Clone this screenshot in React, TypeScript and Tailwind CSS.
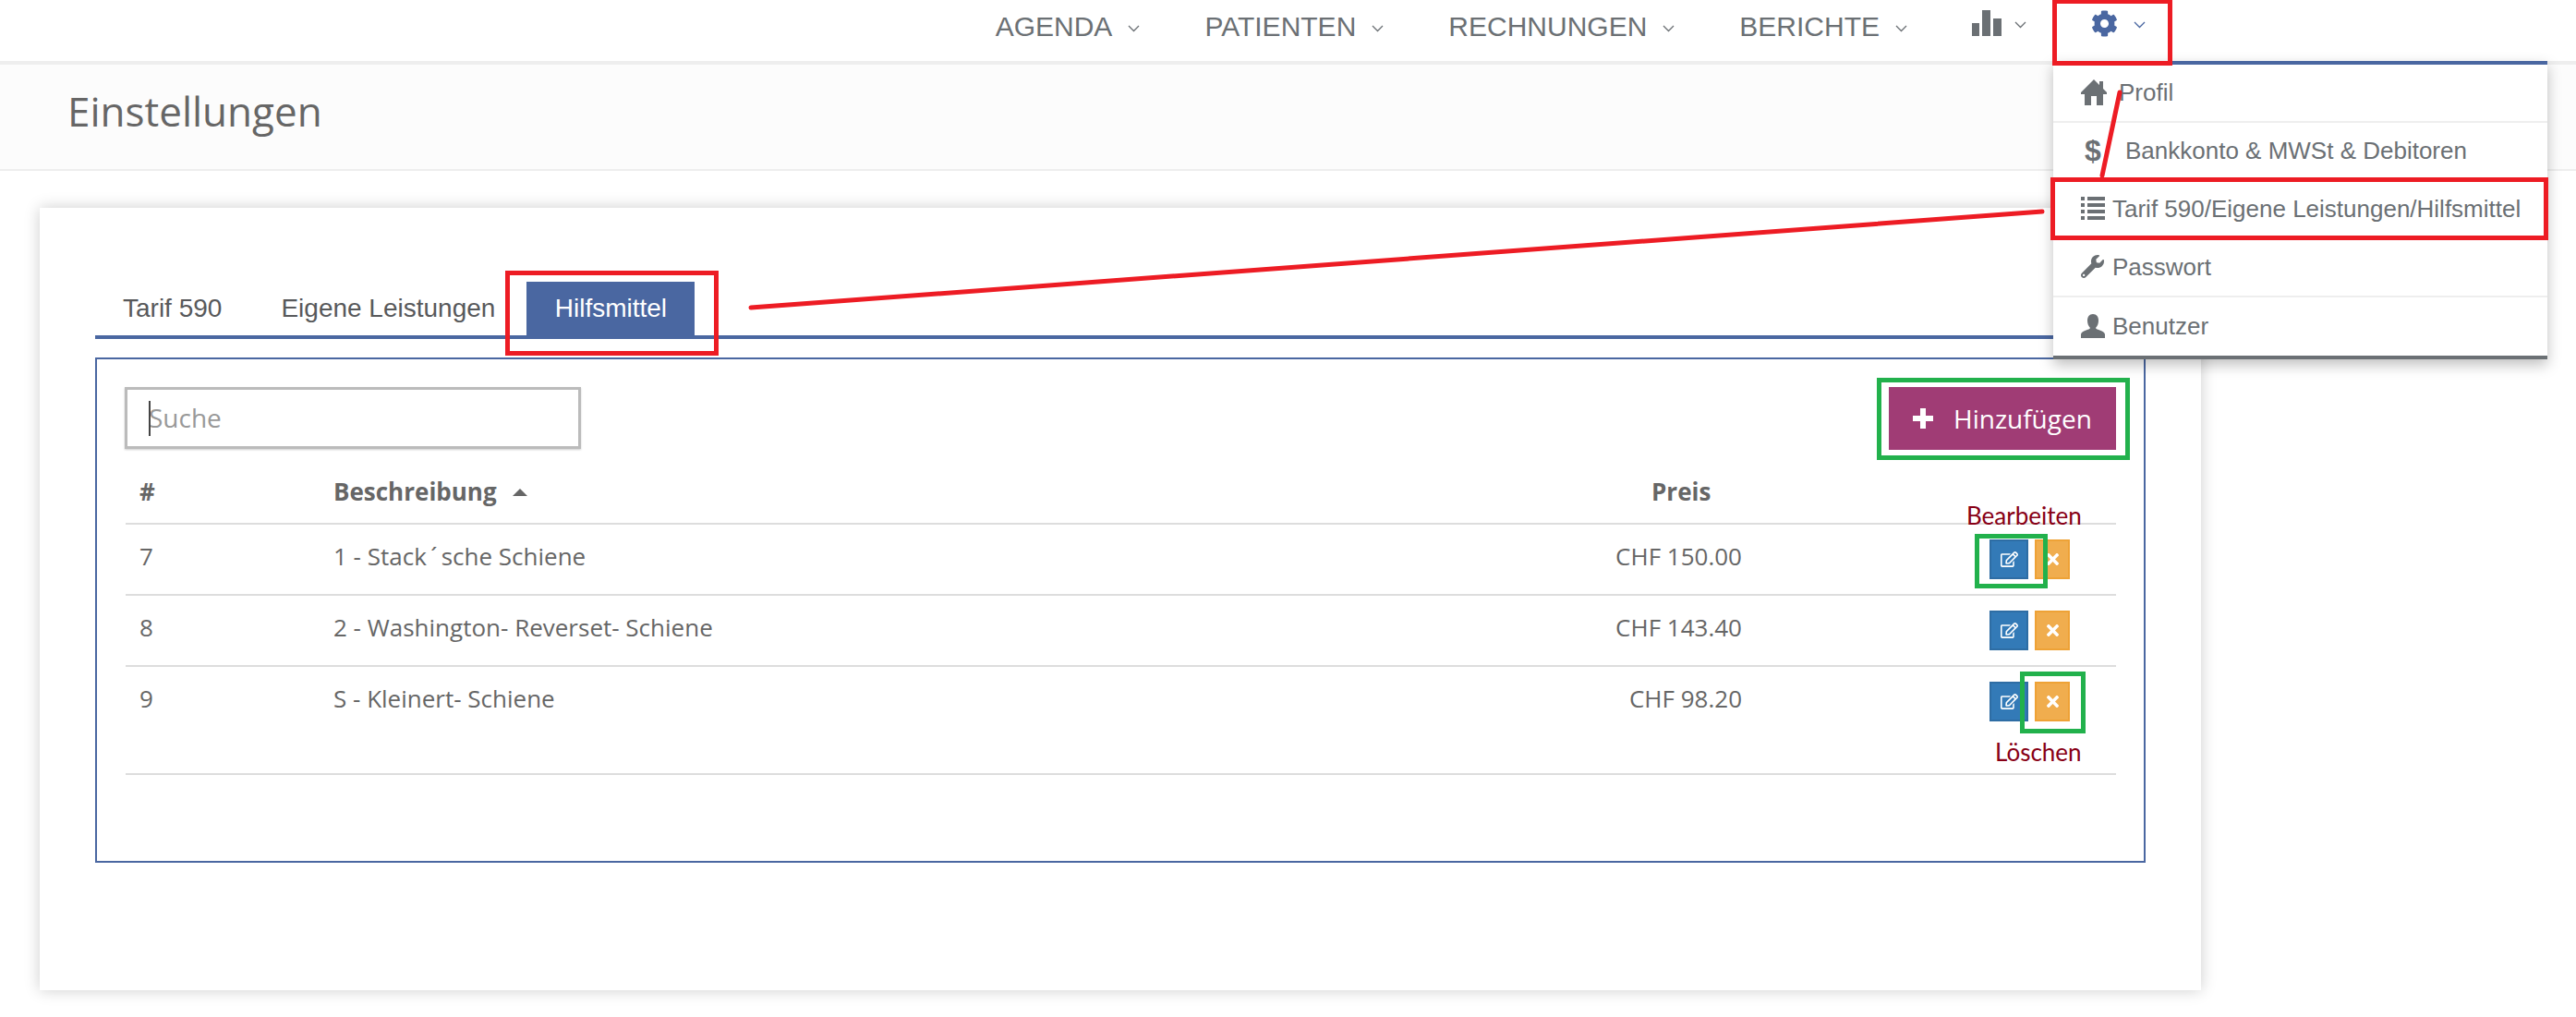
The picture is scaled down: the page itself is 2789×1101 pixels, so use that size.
import React from 'react';
import { FaCog, FaRegEdit, FaTimes, FaWrench } from 'react-icons/fa';

const Chevron = ({ className }: { className: string }) => (
  <svg viewBox="0 0 13 8" className={`w-[13px] h-[8px] ${className}`} fill="none" stroke="currentColor" strokeWidth="1.3">
    <path d="M1 1l5.5 5.5L12 1" />
  </svg>
);

const HomeIcon = () => (
  <svg viewBox="0 0 28 28" className="h-[28px] w-[28px]" fill="currentColor">
    <path d="M14 0l6 6V2h4v8l4 4v2h-4v12h-7V18h-6v10H4V16H0v-2z" />
  </svg>
);

const ListIcon = () => (
  <svg viewBox="0 0 26 26" className="h-[26px] w-[26px]" fill="currentColor">
    <rect x="0" y="0" width="4" height="4" />
    <rect x="7" y="0" width="19" height="4" />
    <rect x="0" y="7" width="4" height="4" />
    <rect x="7" y="7" width="19" height="4" />
    <rect x="0" y="14" width="4" height="4" />
    <rect x="7" y="14" width="19" height="4" />
    <rect x="0" y="21" width="4" height="4" />
    <rect x="7" y="21" width="19" height="4" />
  </svg>
);

const UserIcon = () => (
  <svg viewBox="0 0 26 26" className="h-[26px] w-[26px]" fill="currentColor">
    <path d="M13 0c4 0 6 3 6 7 0 3-1 6-3 8 0 2 10 3 10 7v4H0v-4c0-4 10-5 10-7-2-2-3-5-3-8 0-4 2-7 6-7z" />
  </svg>
);

const navItems = ['AGENDA', 'PATIENTEN', 'RECHNUNGEN', 'BERICHTE'];

const menuItems = [
  { label: 'Profil', icon: <HomeIcon />, textClass: 'ml-[13px]' },
  {
    label: 'Bankkonto & MWSt & Debitoren',
    icon: <span className="w-[28px] pl-[4px] text-[32px] font-bold leading-none">$</span>,
    textClass: 'ml-[20px]',
  },
  { label: 'Tarif 590/Eigene Leistungen/Hilfsmittel', icon: <ListIcon />, textClass: 'ml-[8px]' },
  { label: 'Passwort', icon: <FaWrench className="h-[25px] w-[25px]" />, textClass: 'ml-[9px]' },
  { label: 'Benutzer', icon: <UserIcon />, textClass: 'ml-[8px]' },
];

const rows = [
  { id: 7, name: '1 - Stack\u2009´\u2009sche Schiene', price: 'CHF 150.00', rowClass: 'h-[77px]' },
  { id: 8, name: '2 - Washington- Reverset- Schiene', price: 'CHF 143.40', rowClass: 'h-[77px]' },
  { id: 9, name: 'S - Kleinert- Schiene', price: 'CHF 98.20', rowClass: 'h-[117px]' },
];

function Row({ id, name, price, rowClass }: { id: number; name: string; price: string; rowClass: string }) {
  return (
    <div className={`grid grid-cols-[211px_1fr_140px_405px] border-b-2 border-[#dddddd] text-[26px] leading-[36px] text-[#666666] ${rowClass}`}>
      <div className="pl-[15px] pt-[16px]">{id}</div>
      <div className="pl-[14px] pt-[16px]">{name}</div>
      <div className="pt-[16px] text-right">{price}</div>
      <div className="flex items-start gap-[7px] pl-[268px] pt-[16px]">
        <button className="flex h-[43px] w-[42px] items-center justify-center border-2 border-[#2e6da4] bg-[#337ab7] text-white">
          <FaRegEdit className="h-[19px] w-[19px]" />
        </button>
        <button className="flex h-[43px] w-[38px] items-center justify-center border-2 border-[#eea236] bg-[#f0ad4e] text-white">
          <FaTimes className="h-[19px] w-[19px]" />
        </button>
      </div>
    </div>
  );
}

export default function App() {
  return (
    <div className="relative h-[1101px] w-[2789px] overflow-hidden bg-white font-['Open_Sans',sans-serif]">
      {/* Kopfzeile */}
      <header className="relative z-20 flex h-[70px] items-start justify-end gap-[70px] border-b-4 border-[#eeeeee] pr-[466px] pt-[11px] font-['Liberation_Sans',sans-serif] text-[30px] leading-[36px] text-[#6b7074]">
        {navItems.map((item) => (
          <div key={item} className="flex items-center gap-[17px]">
            <span>{item}</span>
            <Chevron className="mt-[3px] text-[#6b7074]" />
          </div>
        ))}
        <div className="flex items-center gap-[14px]">
          <svg viewBox="0 0 32 28" className="h-[28px] w-[32px]" fill="#6b7074">
            <rect x="0" y="14" width="8" height="14" />
            <rect x="11" y="0" width="9" height="28" />
            <rect x="23" y="9" width="9" height="19" />
          </svg>
          <Chevron className="mt-[3px] text-[#6b7074]" />
        </div>
        <div className="flex items-center gap-[17px]">
          <FaCog className="h-[29px] w-[29px] text-[#4a67a1]" />
          <Chevron className="mt-[3px] text-[#4a67a1]" />
        </div>

        <div className="absolute right-[31px] top-[66px] w-[535px] border-y-4 border-t-[#4a67a1] border-b-[#6b7074] bg-white text-[26px] shadow-[0_6px_14px_rgba(0,0,0,0.25)]">
          {menuItems.map((m) => (
            <div key={m.label} className="flex h-[63px] items-center border-b-2 border-[#eeeeee] pb-[2px] pl-[30px] last:border-b-0">
              {m.icon}
              <span className={m.textClass}>{m.label}</span>
            </div>
          ))}
        </div>
      </header>

      <div className="h-[115px] border-b-2 border-[#eeeeee] bg-[#fcfcfc] pl-[73px] pt-[20px] text-[44px] leading-[60px] text-[#666666]">
        Einstellungen
      </div>

      {/* Karte */}
      <main className="ml-[43px] mt-[40px] h-[847px] w-[2340px] bg-white px-[60px] pt-[80px] shadow-[0_0_16px_rgba(0,0,0,0.2)]">
        <div className="flex border-b-4 border-[#4a67a1] font-['Liberation_Sans',sans-serif] text-[28px]">
          <div className="flex h-[58px] items-center pl-[30px] pr-[64px] text-[#58595b]">Tarif 590</div>
          <div className="flex h-[58px] items-center pr-[34px] text-[#58595b]">Eigene Leistungen</div>
          <div className="flex h-[58px] w-[182px] items-center justify-center bg-[#4a67a1] text-white">Hilfsmittel</div>
        </div>

        <section className="mt-[20px] h-[547px] border-2 border-[#4a67a1] pl-[31px] pr-[30px] pt-[30px]">
          <div className="flex items-start justify-between">
            <div className="relative -ml-px h-[67px] w-[494px] border-[3px] border-[#bbbbbb] pl-[23px] text-[28px] leading-[61px] text-[#999999] shadow-[0_1px_2px_rgba(0,0,0,0.2)]">
              <span className="absolute left-[23px] top-[12px] h-[38px] w-[2px] bg-[#444444]" />
              Suche
            </div>
            <button className="flex h-[68px] w-[246px] items-center bg-[#a03c75] pl-[26px] text-[28px] text-white">
              <svg viewBox="0 0 22 22" className="h-[22px] w-[22px]" fill="currentColor">
                <path d="M8 0h6v8h8v6h-8v8H8v-8H0V8h8z" />
              </svg>
              <span className="ml-[22px]">Hinzufügen</span>
            </button>
          </div>

          <div className="grid h-[81px] grid-cols-[211px_1fr_140px_405px] items-start border-b-2 border-[#dddddd] pt-[27px] text-[26px] font-bold leading-[36px] text-[#666666]">
            <div className="pl-[15px]">#</div>
            <div className="flex items-center pl-[14px]">
              Beschreibung
              <span className="ml-[17px] mt-[2px] h-0 w-0 border-x-[8px] border-b-[8px] border-x-transparent border-b-[#666666]" />
            </div>
            <div className="pl-[42px]">Preis</div>
            <div />
          </div>

          {rows.map((r) => (
            <Row key={r.id} {...r} />
          ))}
        </section>
      </main>

      {/* Markierungen über dem Screenshot */}
      <div className="pointer-events-none absolute inset-0 z-30">
        <svg className="absolute inset-0 h-[1101px] w-[2789px]" viewBox="0 0 2789 1101" fill="none" stroke="#ed1c24" strokeWidth="5" strokeLinecap="round">
          <path d="M813 333L2211 229" />
          <path d="M2295 100L2276 190" />
        </svg>
        <div className="absolute left-[2222px] top-[-1px] h-[72px] w-[130px] border-[5px] border-[#ed1c24]" />
        <div className="absolute left-[2220px] top-[192px] h-[68px] w-[539px] border-[5px] border-[#ed1c24]" />
        <div className="absolute left-[547px] top-[293px] h-[92px] w-[231px] border-[5px] border-[#ed1c24]" />
        <div className="absolute left-[2032px] top-[409px] h-[89px] w-[274px] border-[5px] border-[#22b14c]" />
        <div className="absolute left-[2138px] top-[578px] h-[59px] w-[79px] border-[5px] border-[#22b14c]" />
        <div className="absolute left-[2187px] top-[727px] h-[67px] w-[71px] border-[5px] border-[#22b14c]" />
        <span className="absolute left-[2129px] top-[541px] font-['Lato',sans-serif] text-[26px] leading-[34px] text-[#880015]">Bearbeiten</span>
        <span className="absolute left-[2160px] top-[797px] font-['Lato',sans-serif] text-[26px] leading-[34px] text-[#880015]">Löschen</span>
      </div>
    </div>
  );
}
